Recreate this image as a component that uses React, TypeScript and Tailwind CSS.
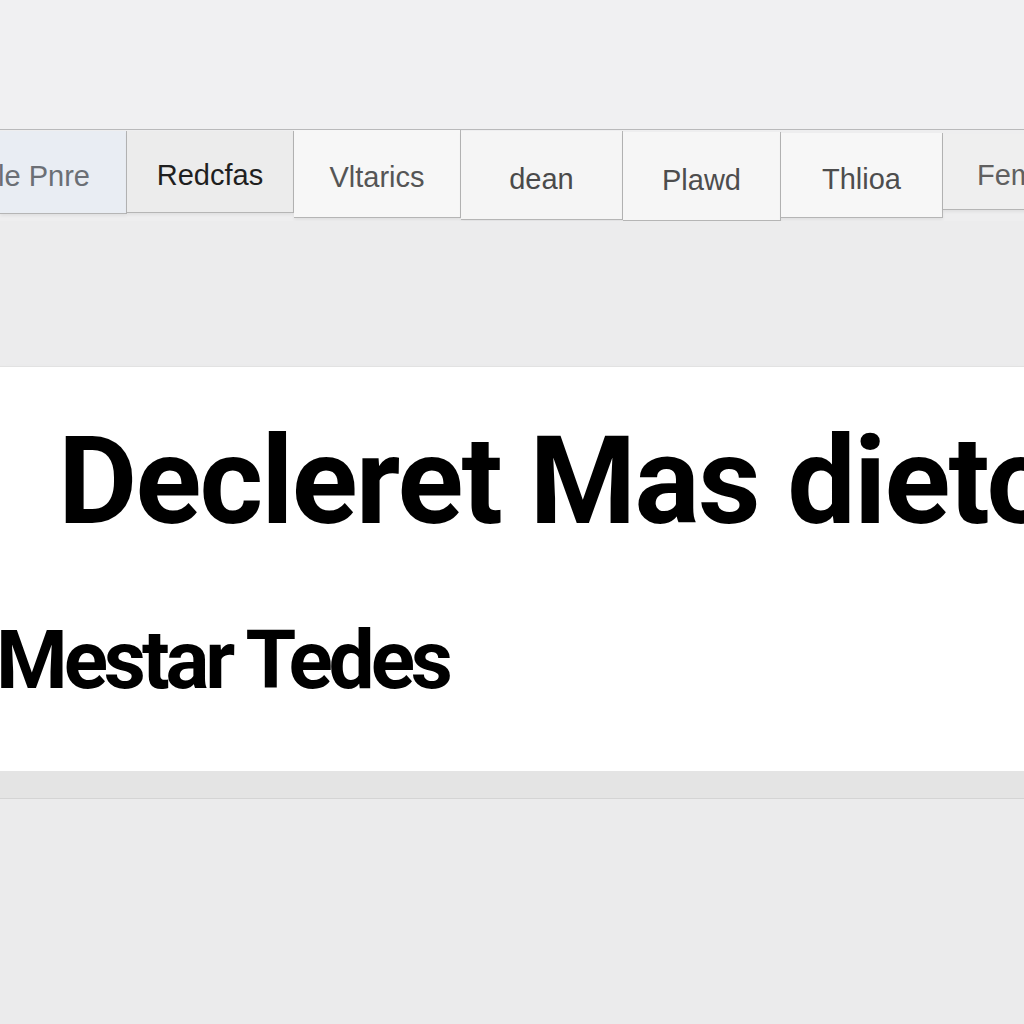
import React from "react";

const tabs = [
  { label: "Sale Pnre", w: "w-[127px]", h: "h-[83px]", mt: "mt-[1px]", bg: "bg-[#e9edf3]", text: "text-[#6b6f75]", extra: "justify-end pr-[36px]" },
  { label: "Redcfas", w: "w-[167px]", h: "h-[82px]", mt: "mt-[1px]", bg: "bg-[#ececec]", text: "text-[#1f1f1f]", extra: "justify-center" },
  { label: "Vltarics", w: "w-[167px]", h: "h-[88px]", mt: "mt-0", bg: "bg-[#f7f7f7]", text: "text-[#555555]", extra: "justify-center" },
  { label: "dean", w: "w-[162px]", h: "h-[89px]", mt: "mt-[1px]", bg: "bg-[#f5f5f5]", text: "text-[#4a4a4a]", extra: "justify-center" },
  { label: "Plawd", w: "w-[158px]", h: "h-[89px]", mt: "mt-[2px]", bg: "bg-[#f6f6f6]", text: "text-[#4d4d4d]", extra: "justify-center" },
  { label: "Thlioa", w: "w-[162px]", h: "h-[85px]", mt: "mt-[3px]", bg: "bg-[#f7f7f7]", text: "text-[#4d4d4d]", extra: "justify-center" },
  { label: "Fem", w: "w-[100px]", h: "h-[76px]", mt: "mt-[4px]", bg: "bg-[#efefef]", text: "text-[#606060]", extra: "justify-start pl-[34px]" },
];

export default function App() {
  return (
    <div className="w-[1024px] h-[1024px] overflow-hidden bg-[#eeeeef] flex flex-col" style={{ fontFamily: '"Liberation Sans", Arial, sans-serif' }}>
      <div className="h-[130px] bg-[#f0f0f2]" />
      <div className="flex items-start border-t border-[#b9b9bb] -mt-[1px]">
        {tabs.map((t, i) => (
          <div
            key={i}
            className={`${t.w} ${t.h} ${t.mt} ${t.bg} ${t.text} ${t.extra} shrink-0 flex items-center pt-[8px] border-r border-b border-[#b5b5b5] shadow-[0_2px_3px_rgba(0,0,0,0.06)] text-[29px] leading-none whitespace-nowrap overflow-hidden`}
          >
            {t.label}
          </div>
        ))}
      </div>
      <div className="h-[145px] bg-[#ececed]" />
      <div className="h-[405px] bg-white border-t border-[#e2e2e2] shadow-[0_6px_8px_rgba(0,0,0,0.12)] flex flex-col overflow-hidden">
        <div
          className="mt-[54px] pl-[58px] text-[122px] font-bold leading-[1] text-black whitespace-nowrap tracking-[-0.015em]"
          style={{ fontFamily: 'Roboto, sans-serif' }}
        >
          Decleret Mas dieto
        </div>
        <div
          className="mt-[76px] -ml-[4px] text-[82px] font-bold leading-[1] text-black whitespace-nowrap tracking-[-0.05em]"
          style={{ fontFamily: 'Roboto, sans-serif' }}
        >
          Mestar Tedes
        </div>
      </div>
      <div className="h-[27px] bg-[#e4e4e4]" />
      <div className="h-[1px] bg-[#d4d4d4]" />
      <div className="flex-1 bg-[#ebebec]" />
    </div>
  );
}
